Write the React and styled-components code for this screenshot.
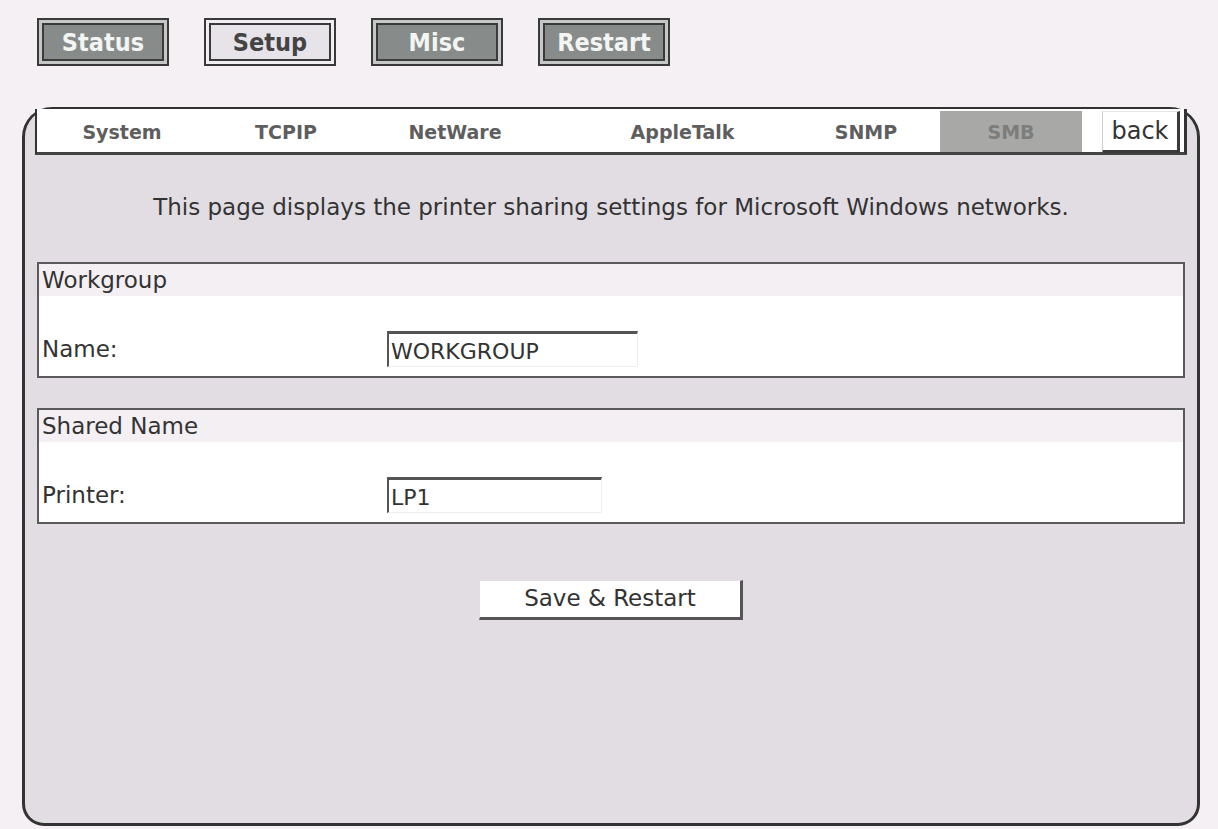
import React from 'react'
import styled, { createGlobalStyle } from 'styled-components'

const GlobalStyle = createGlobalStyle`
    html, body {
        margin: 0;
        padding: 0;
        background: #f4f0f3;
    }
    body {
        font-family: "DejaVu Sans", Verdana, sans-serif;
        color: #333;
    }
`

const topMenu = [
    { label: 'Status', active: false },
    { label: 'Setup', active: true },
    { label: 'Misc', active: false },
    { label: 'Restart', active: false },
]

const tabs = [
    { label: 'System', w: 170 },
    { label: 'TCPIP', w: 158 },
    { label: 'NetWare', w: 180 },
    { label: 'AppleTalk', w: 275 },
    { label: 'SNMP', w: 92 },
]

const App = () => {
  return (
    <Page>
        <GlobalStyle />
        <TopNav>
            {topMenu.map((m) => (
                <MenuButton key={m.label} $active={m.active}>{m.label}</MenuButton>
            ))}
        </TopNav>

        <Panel>
            <TabBar>
                {tabs.map((t) => (
                    <Tab key={t.label} $w={t.w}>{t.label}</Tab>
                ))}
                <Spacer $w={28} />
                <ActiveTab>SMB</ActiveTab>
                <Spacer $w={20} />
                <BackButton>back</BackButton>
            </TabBar>

            <Intro>This page displays the printer sharing settings for Microsoft Windows networks.</Intro>

            <Section>
                <SectionHead>Workgroup</SectionHead>
                <FieldRow>
                    <FieldLabel>Name:</FieldLabel>
                    <TextBox $w={251} defaultValue="WORKGROUP" />
                </FieldRow>
            </Section>

            <Section>
                <SectionHead>Shared Name</SectionHead>
                <FieldRow>
                    <FieldLabel>Printer:</FieldLabel>
                    <TextBox $w={215} defaultValue="LP1" />
                </FieldRow>
            </Section>

            <Actions>
                <SaveButton>Save &amp; Restart</SaveButton>
            </Actions>
        </Panel>
    </Page>
  )
}

const Page = styled.div`
    width: 1218px;
    height: 829px;
    overflow: hidden;
    padding: 18px 0 0 22px;
    box-sizing: border-box;
`

const TopNav = styled.div`
    display: flex;
    gap: 35px;
    padding-left: 15px;
`

const MenuButton = styled.div`
    width: 132px;
    height: 48px;
    box-sizing: border-box;
    border: 2px solid #3a3a3a;
    background: ${p => p.$active ? '#f0eef0' : '#c4c7c5'};
    box-shadow:
        inset 0 0 0 3px ${p => p.$active ? '#f0eef0' : '#c4c7c5'},
        inset 0 0 0 5px #3a3a3a,
        inset 0 0 0 40px ${p => p.$active ? '#e6e4e8' : '#878c8a'};
    display: flex;
    align-items: center;
    justify-content: center;
    font-family: "DejaVu Sans Condensed", "DejaVu Sans", sans-serif;
    font-stretch: condensed;
    font-weight: bold;
    font-size: 25px;
    color: ${p => p.$active ? '#444' : '#f2f5f2'};
`

const Panel = styled.div`
    margin-top: 41px;
    width: 1178px;
    height: 719px;
    box-sizing: border-box;
    border: 3px solid #333;
    border-top-width: 2px;
    border-bottom-width: 3px;
    border-radius: 30px 30px 22px 22px;
    background: #e1dde2;
    padding: 0 12px;
`

const TabBar = styled.div`
    display: flex;
    align-items: stretch;
    height: 46px;
    box-sizing: border-box;
    margin: 0 -2px 0 -2px;
    background: #fff;
    border-left: 2px solid #333;
    border-right: 3px solid #333;
    border-bottom: 3px solid #444;
    padding-top: 2px;
`

const Tab = styled.div`
    width: ${p => p.$w}px;
    flex: none;
    display: flex;
    align-items: center;
    justify-content: center;
    font-weight: bold;
    font-size: 19px;
    color: #5e5e5e;
`

const Spacer = styled.div`
    width: ${p => p.$w}px;
    flex: none;
`

const ActiveTab = styled(Tab)`
    width: 142px;
    background: #a8a9a7;
    color: #7c7d7c;
`

const BackButton = styled.div`
    width: 78px;
    flex: none;
    box-sizing: border-box;
    border-left: 1px solid #cfcfcf;
    border-top: 1px solid #e4e4e4;
    border-right: 3px solid #3a3a3a;
    border-bottom: 3px solid #3a3a3a;
    margin-bottom: -1px;
    display: flex;
    align-items: center;
    justify-content: center;
    font-size: 24px;
    color: #333;
    background: #fff;
`

const Intro = styled.p`
    margin: 0;
    padding: 39px 0 0;
    height: 107px;
    box-sizing: border-box;
    text-align: center;
    font-size: 23px;
    color: #333;
`

const Section = styled.div`
    height: 116px;
    box-sizing: border-box;
    border: 2px solid #5a5a5a;
    background: #fff;
    margin-bottom: 30px;
`

const SectionHead = styled.div`
    height: 32px;
    padding: 3px 0 0 3px;
    box-sizing: border-box;
    background: #f3eff3;
    font-size: 23px;
    color: #333;
`

const FieldRow = styled.div`
    display: flex;
    align-items: center;
    height: 78px;
    padding-top: 28px;
    box-sizing: border-box;
`

const FieldLabel = styled.div`
    width: 345px;
    padding-left: 3px;
    font-size: 23px;
    color: #333;
`

const TextBox = styled.input`
    width: ${p => p.$w}px;
    height: 36px;
    box-sizing: border-box;
    border: none;
    border-top: 3px solid #555;
    border-left: 2px solid #555;
    border-right: 1px solid #eee;
    border-bottom: 1px solid #eee;
    background: #fff;
    padding: 2px 2px 0;
    font-family: "DejaVu Sans", Verdana, sans-serif;
    font-size: 22px;
    color: #333;
    outline: none;
`

const Actions = styled.div`
    display: flex;
    justify-content: center;
    padding-top: 26px;
`

const SaveButton = styled.button`
    width: 264px;
    height: 40px;
    box-sizing: border-box;
    background: #fff;
    border: none;
    border-top: 1px solid #e0e0e0;
    border-left: 1px solid #e0e0e0;
    border-right: 3px solid #555;
    border-bottom: 3px solid #555;
    padding: 0 0 2px;
    font-family: "DejaVu Sans", Verdana, sans-serif;
    font-size: 23px;
    color: #333;
    cursor: pointer;
`

export default App
